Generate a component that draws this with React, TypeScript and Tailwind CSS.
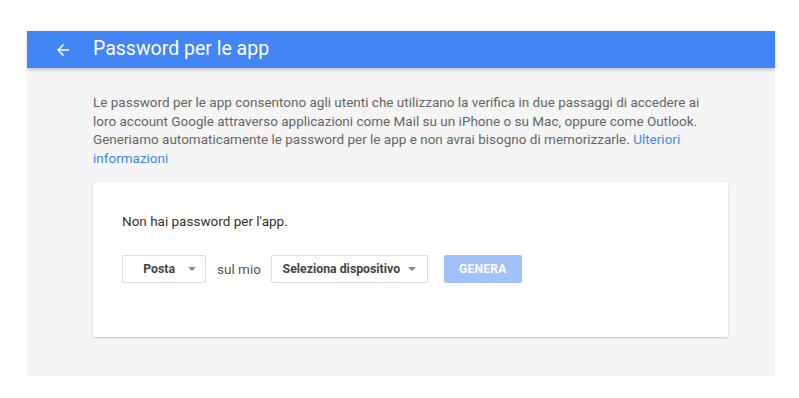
function Caret() {
  return <span className="ml-2 inline-block h-0 w-0 border-x-[4px] border-t-[4px] border-x-transparent border-t-[#888]" />
}

export default function App() {
  return (
    <div className="min-h-[398px] w-[799px] bg-white pt-[31px] font-['Roboto',sans-serif]">
      <div className="ml-[27px] w-[748px] bg-[#f5f5f5] pb-[39px]">
        <header className="relative z-10 flex h-[37px] items-center bg-[#4285f4] shadow-[0_2px_3px_rgba(0,0,0,0.2)]">
          <svg className="ml-[27px] h-[18px] w-[18px]" viewBox="0 0 24 24" fill="white">
            <path d="M20 11H7.83l5.59-5.59L12 4l-8 8 8 8 1.41-1.41L7.83 13H20v-2z" />
          </svg>
          <h1 className="ml-[21px] pb-[2px] text-[19.5px] text-white">Password per le app</h1>
        </header>
        <p className="mx-[66px] mt-[25px] text-[13.5px] leading-[18.5px] text-[#666]">
          Le password per le app consentono agli utenti che utilizzano la verifica in due passaggi di accedere ai loro account Google attraverso applicazioni come Mail su un iPhone o su Mac, oppure come Outlook. Generiamo automaticamente le password per le app e non avrai bisogno di memorizzarle. <a className="text-[#4285f4]">Ulteriori informazioni</a>
        </p>
        <div className="ml-[66px] mr-[47px] mt-[15px] h-[155px] rounded-[2px] bg-white px-[29px] pt-[29px] shadow-[0_1px_2px_rgba(0,0,0,0.2)]">
          <p className="text-[13.5px] text-[#333]">Non hai password per l'app.</p>
          <div className="mt-[24px] flex items-center">
            <div className="flex h-[28px] w-[84px] items-center justify-end rounded-[2px] border border-[#ddd] pr-[9px] text-[12.3px] font-bold text-[#444]">
              Posta<span className="ml-[13px] inline-block h-0 w-0 border-x-[4px] border-t-[4px] border-x-transparent border-t-[#888]" />
            </div>
            <span className="ml-[11px] text-[13.5px] text-[#555]">sul mio</span>
            <div className="ml-[10px] flex h-[28px] w-[157px] items-center justify-center rounded-[2px] border border-[#ddd] text-[12.3px] font-bold text-[#444]">
              Seleziona dispositivo
              <Caret />
            </div>
            <button className="ml-[16px] h-[28px] w-[78px] rounded-[2px] bg-[#a0c2f9] text-[12px] font-bold tracking-[0.3px] text-white">
              GENERA
            </button>
          </div>
        </div>
      </div>
    </div>
  )
}
